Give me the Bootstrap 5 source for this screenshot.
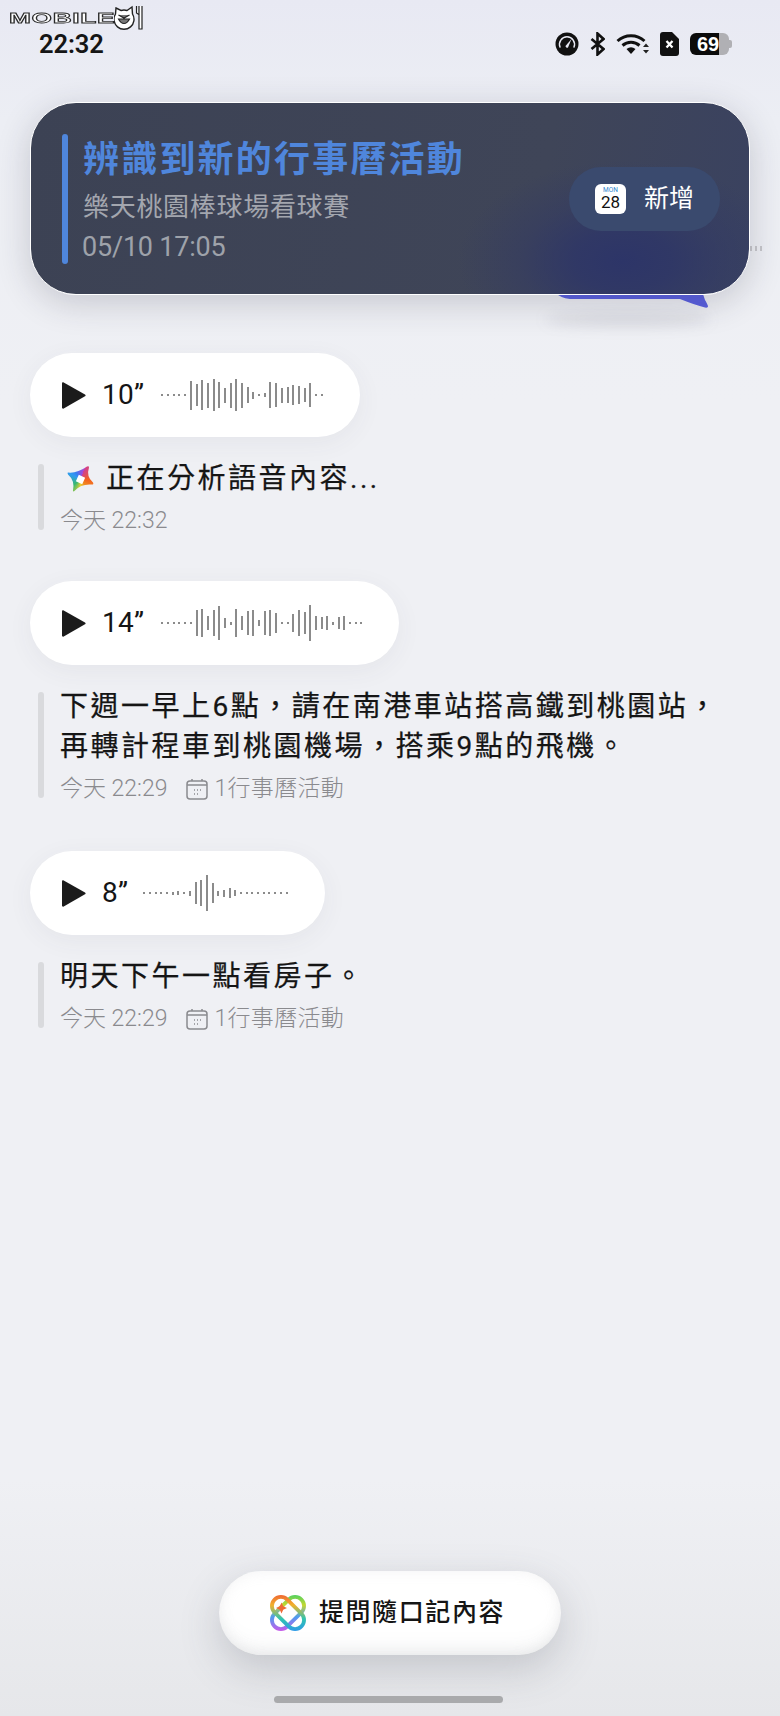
<!DOCTYPE html>
<html lang="zh-Hant">
<head>
  <meta charset="UTF-8" />
  <meta name="viewport" content="width=device-width, initial-scale=1.0"/>
  <title>隨口記</title>
  <link rel="stylesheet" href="https://cdn.jsdelivr.net/npm/bootstrap@5.3.0/dist/css/bootstrap.min.css" />
  <style>
    body { background: #eff0f4; font-family: Roboto, "Noto Sans CJK TC", sans-serif; color: #151515; }
    .phone-page { width: 780px; height: 1716px; overflow: hidden; position: relative; background: linear-gradient(#e8e9f3 0, #eceef4 120px, #eff0f4 400px, #eff0f4 1480px, #e6e7ea 1716px); }

    .site-logo { position: absolute; left: 9px; top: 5px; height: 25px; }
    .site-logo-text { position: absolute; left: 0; top: 4px; font: 700 15px/18px "Liberation Sans", sans-serif; color: #fff; -webkit-text-stroke: .8px #2a2a2a; letter-spacing: .4px; transform: scaleX(1.75); transform-origin: left center; }
    .site-logo svg { position: absolute; left: 105px; top: 0; }

    .status-row { height: 88px; padding-left: 39px; padding-right: 51px; }
    .status-time { font-size: 25.5px; font-weight: 600; letter-spacing: -.1px; }
    .status-icons { gap: 11px; }
    .batt { width: 39px; height: 22px; position: relative; border-radius: 6px; background: linear-gradient(90deg, #0b0b0b 74%, #b0b0b4 74%); color: #fff; font: 700 20px/22px "Liberation Sans", sans-serif; text-align: center; padding-right: 3px; }
    .batt::after { content: ""; position: absolute; right: -3px; top: 7px; width: 3px; height: 8px; border-radius: 0 2px 2px 0; background: #b0b0b4; }

    .event-wrap { margin: 14px 30px 0; height: 193px; position: relative; }
    .event-card { height: 193px; border-radius: 46px; border: 1px solid #fff; padding: 31px 29px 31px 31px; background: radial-gradient(165px 100px at 592px 158px, #2d3568 0, rgba(45,53,104,.8) 30%, rgba(45,53,104,.35) 62%, rgba(45,53,104,0) 100%), linear-gradient(100deg, #3c4254, #3f4558 70%, #3a4260); box-shadow: 0 8px 34px rgba(40,42,60,.2); position: relative; z-index: 1; }
    .event-line { width: 6px; height: 130px; border-radius: 3px; background: #4f86dc; }
    .event-text { margin-left: 15px; }
    .event-title { font-size: 36px; line-height: 46px; font-weight: 700; color: #4f86dc; letter-spacing: 2.2px; margin-top: 3px; }
    .event-sub { font-size: 26px; line-height: 36px; color: #a3a6ae; letter-spacing: .7px; margin-top: 6px; }
    .event-date { font-size: 27px; line-height: 36px; color: #9ea2aa; margin: 4px 0 0 -1px; letter-spacing: -.2px; }
    .event-add { width: 151px; height: 64px; background: #3a4a6e; color: #fff; font-size: 25px; gap: 18px; border-radius: 32px; border: 0; padding: 0; }
    .event-add:hover { background: #3a4a6e; color: #fff; }
    .cal-tile { width: 31px; height: 30px; background: #fff; border-radius: 6px; color: #111; text-align: center; position: relative; }
    .cal-tile b { position: absolute; left: 0; right: 0; top: 3px; font: 400 6.5px/7px Roboto, sans-serif; color: #2f86d0; }
    .cal-tile span { position: absolute; left: 0; right: 0; top: 9px; font: 400 17px/19px Roboto, sans-serif; }
    .bubble-tail { position: absolute; left: 525px; top: 190px; z-index: 0; }
    .tail-shadow { position: absolute; left: 515px; top: 210px; width: 165px; height: 14px; border-radius: 50%; background: rgba(90,92,110,.14); filter: blur(7px); }
    .stray-dots { position: absolute; left: 720px; top: 144px; gap: 3px; }
    .stray-dots i { display: block; width: 2px; height: 5px; background: #c6c6ca; }

    .note-list { margin: 58px 0 0 30px; }
    .voice-pill { height: 84px; padding: 0 37px 0 31px; box-shadow: 0 6px 26px rgba(60,62,80,.06); }
    .play-tri { margin-right: 16px; }
    .voice-time { font-size: 28px; margin-right: 17px; letter-spacing: .3px; }
    .voice-time.one-digit { margin-right: 15px; }
    .wave { gap: 3.7px; }
    .wave-bar { width: 2px; background: #8b8b8b; display: block; }
    .note-block { margin: 27px 0 53px 8px; gap: 16px; }
    .note-block.first-note { margin-bottom: 51px; }
    .note-rule { width: 6px; border-radius: 3px; background: #d9dadd; flex: none; }
    .note-body { margin: -5px 0; }
    .note-text { font-size: 28px; line-height: 40px; letter-spacing: 2.5px; font-weight: 400; -webkit-text-stroke: .25px #151515; }
    .note-meta { font-size: 23px; line-height: 28px; margin-top: 8px; color: #8a8a8e; font-weight: 300; gap: 19px; }
    .note-meta .cal-link { gap: 6px; letter-spacing: .3px; }
    .ai-star { width: 27px; height: 27px; position: relative; margin: 0 12px 0 7px; flex: none; background: conic-gradient(from 20deg, #d0408f, #f4601f 70deg, #f08a20 120deg, #e8d030 160deg, #38b870 210deg, #2f9af2 280deg, #3a7cf0 310deg, #a847d8 360deg); clip-path: path("M1 7Q10 8 20 1Q22 0 22 2Q19 11 26 17Q27 19 25 19Q14 18 8 25Q6 27 6 25Q8 15 1 9Q0 7 1 7Z"); }
    .ai-star::after { content: ""; position: absolute; left: 10px; top: 10px; width: 7px; height: 7px; background: #fff; transform: rotate(25deg); }

    .ask-row { position: absolute; left: 0; right: 0; bottom: 61px; }
    .ask-btn { width: 342px; height: 84px; border-radius: 42px; border: 0; gap: 13px; padding: 0 5px 0 0; font-size: 25px; font-weight: 500; letter-spacing: 1.6px; color: #151515; background: #fff; box-shadow: inset 0 -14px 22px -12px rgba(120,122,130,.16), inset 0 0 14px rgba(190,190,195,.18), 0 14px 40px rgba(70,72,85,.22); }
    .ask-btn:hover { background: #fff; color: #151515; }
    .home-bar { position: absolute; left: 274px; top: 1696px; width: 229px; height: 7px; border-radius: 4px; background: #a9aaac; }
  </style>
</head>
<body class="m-0">
<div class="phone-page">
  <div class="site-logo">
    <span class="site-logo-text">MOBILE</span>
    <svg width="30" height="25" viewBox="0 0 30 25" fill="none" stroke="#222" stroke-width="1.4">
      <path d="M2 3l5 2.500a10.500 10.500 0 0 1 6 0L18 2l.5 7a10 10 0 1 1-17 0z" fill="#fff"/>
      <path d="M4.500 10l5.500 3 5.500-3M4.500 14c3 6 8 6 11 0z" fill="#777" stroke-width="1.200"/>
      <path d="M25 1v23h3V1M22.500 1v7l3 2" stroke-width="1.200" fill="#fff"/>
    </svg>
  </div>

  <div class="status-row d-flex align-items-center justify-content-between">
    <span class="status-time">22:32</span>
    <div class="status-icons d-flex align-items-center">
      <svg width="24" height="24" viewBox="0 0 24 24"><circle cx="12" cy="12" r="11.500" fill="#111"/><path d="M5 15a7.500 7.500 0 1 1 14 0" fill="none" stroke="#e8e9f3" stroke-width="1.500" stroke-linecap="round"/><path d="M10.500 14l6-7-3.500 8.500a1.700 1.700 0 0 1-2.500-1.500z" fill="#e8e9f3"/></svg>
      <svg width="15" height="24" viewBox="0 0 15 24" fill="none" stroke="#111" stroke-width="2.600"><path d="M1.500 7l12 10-6 5.500V1.500l6 5.500-12 10"/></svg>
      <svg width="33" height="22" viewBox="0 0 33 22"><g fill="none" stroke="#111" stroke-width="3"><path d="M1.500 8a20 20 0 0 1 27 0"/><path d="M6.500 12.500a13 13 0 0 1 17 0"/></g><path d="M10.500 16a7.500 7.500 0 0 1 9 0l-4.500 5z" fill="#111"/><path d="M27 14l3-3.500 3 3.500zM27 17h6l-3 3.500z" fill="#222"/></svg>
      <svg width="19" height="24" viewBox="0 0 19 24"><path d="M3 0h9l7 7v14a3 3 0 0 1-3 3H3a3 3 0 0 1-3-3V3a3 3 0 0 1 3-3z" fill="#111"/><path d="M6.500 9l6 6.500M12.500 9l-6 6.500" stroke="#fff" stroke-width="2.300"/></svg>
      <div class="batt">69</div>
    </div>
  </div>

  <div class="event-wrap">
    <svg class="bubble-tail" width="156" height="18" viewBox="0 0 156 18"><path d="M0 0H148V2L150 8Q153 13 153 14.500Q153 16 150 15.500Q140 13 125 7L15 7Q5 6 0 0Z" fill="#5a60e0"/></svg>
    <div class="tail-shadow"></div>
    <div class="stray-dots d-flex"><i></i><i></i><i></i></div>
    <div class="event-card d-flex align-items-start">
      <div class="event-line flex-shrink-0"></div>
      <div class="event-text flex-grow-1">
        <div class="event-title">辨識到新的行事曆活動</div>
        <div class="event-sub">樂天桃園棒球場看球賽</div>
        <div class="event-date">05/10 17:05</div>
      </div>
      <button class="btn event-add d-flex align-items-center justify-content-center flex-shrink-0 align-self-center">
        <span class="cal-tile d-block"><b>MON</b><span>28</span></span>
        新增
      </button>
    </div>
  </div>

  <div class="note-list">
    <div class="voice-pill d-inline-flex align-items-center bg-white rounded-pill">
      <svg class="play-tri" width="25" height="27" viewBox="0 0 25 27"><path d="M1 1.500v24c0 1 .8 1.500 1.700 1L24 14.300c.8-.5.8-1.300 0-1.800L2.700.500C1.800 0 1 .5 1 1.500z" fill="#1b1b1b"/></svg>
      <span class="voice-time">10”</span>
      <div class="wave d-flex align-items-center" data-bars="2,2,2,2,2,29,22,30,25,32,26,15,25,32,25,16,7,2,4,26,24,15,16,20,18,14,24,2,2"></div>
    </div>
    <div class="note-block first-note d-flex">
      <div class="note-rule"></div>
      <div class="note-body">
        <div class="note-text d-flex align-items-center">
          <span class="ai-star"></span>
          正在分析語音內容...
        </div>
        <div class="note-meta d-flex">今天 22:32</div>
      </div>
    </div>

    <div class="voice-pill d-inline-flex align-items-center bg-white rounded-pill">
      <svg class="play-tri" width="25" height="27" viewBox="0 0 25 27"><path d="M1 1.500v24c0 1 .8 1.500 1.700 1L24 14.300c.8-.5.8-1.300 0-1.800L2.700.500C1.800 0 1 .5 1 1.500z" fill="#1b1b1b"/></svg>
      <span class="voice-time">14”</span>
      <div class="wave d-flex align-items-center" data-bars="2,2,2,2,2,2,26,28,14,26,34,10,3,28,14,24,26,6,24,26,20,2,2,18,26,22,36,14,12,14,3,12,14,2,2,2"></div>
    </div>
    <div class="note-block d-flex">
      <div class="note-rule"></div>
      <div class="note-body">
        <div class="note-text">下週一早上6點，請在南港車站搭高鐵到桃園站，<br>再轉計程車到桃園機場，搭乘9點的飛機。</div>
        <div class="note-meta d-flex">
          <span>今天 22:29</span>
          <span class="cal-link d-flex align-items-center">
            <svg width="22" height="22" viewBox="0 0 22 22" fill="none" stroke="#8a8a8e" stroke-width="1.500"><rect x="1" y="3" width="20" height="18" rx="3"/><path d="M1 7h20M6 1v2M16 1v2"/><path d="M8 12h1M11 12h1M14 12h1M8 16h1M11 16h1" stroke-width="1.400"/></svg>
            1行事曆活動
          </span>
        </div>
      </div>
    </div>

    <div class="voice-pill d-inline-flex align-items-center bg-white rounded-pill">
      <svg class="play-tri" width="25" height="27" viewBox="0 0 25 27"><path d="M1 1.500v24c0 1 .8 1.500 1.700 1L24 14.300c.8-.5.8-1.300 0-1.800L2.700.500C1.800 0 1 .5 1 1.500z" fill="#1b1b1b"/></svg>
      <span class="voice-time one-digit">8”</span>
      <div class="wave d-flex align-items-center" data-bars="2,2,2,2,2,3,4,2,5,22,26,36,20,5,7,10,6,2,2,2,2,2,2,2,2,2"></div>
    </div>
    <div class="note-block d-flex">
      <div class="note-rule"></div>
      <div class="note-body">
        <div class="note-text">明天下午一點看房子。</div>
        <div class="note-meta d-flex">
          <span>今天 22:29</span>
          <span class="cal-link d-flex align-items-center">
            <svg width="22" height="22" viewBox="0 0 22 22" fill="none" stroke="#8a8a8e" stroke-width="1.500"><rect x="1" y="3" width="20" height="18" rx="3"/><path d="M1 7h20M6 1v2M16 1v2"/><path d="M8 12h1M11 12h1M14 12h1M8 16h1M11 16h1" stroke-width="1.400"/></svg>
            1行事曆活動
          </span>
        </div>
      </div>
    </div>
  </div>

  <div class="ask-row d-flex justify-content-center">
    <button class="btn ask-btn d-flex align-items-center justify-content-center">
      <svg width="36" height="36" viewBox="0 0 36 36" fill="none" stroke-width="3.800">
        <defs>
          <linearGradient id="askGradA" gradientUnits="userSpaceOnUse" x1="4" y1="4" x2="32" y2="32"><stop offset="0" stop-color="#ee5a34"/><stop offset=".3" stop-color="#f2b22c"/><stop offset=".65" stop-color="#2fc4b0"/><stop offset="1" stop-color="#2f94f0"/></linearGradient>
          <linearGradient id="askGradB" gradientUnits="userSpaceOnUse" x1="32" y1="4" x2="4" y2="32"><stop offset="0" stop-color="#3fd06a"/><stop offset=".3" stop-color="#c4d82e"/><stop offset=".6" stop-color="#4f9cf0"/><stop offset="1" stop-color="#d850e8"/></linearGradient>
        </defs>
        <rect x="-1" y="9" width="38" height="18" rx="9" transform="rotate(-45 18 18)" stroke="url(#askGradB)"/>
        <rect x="-1" y="9" width="38" height="18" rx="9" transform="rotate(45 18 18)" stroke="url(#askGradA)"/>
        <path d="M11.500 7.500l1.700 3.800 3.800 1.700-3.800 1.700-1.700 3.800-1.700-3.800L6 13l3.800-1.700z" fill="#ee6a36"/>
      </svg>
      提問隨口記內容
    </button>
  </div>
  <div class="home-bar"></div>
</div>

<script>
  document.querySelectorAll(".wave").forEach(function (wave) {
    wave.dataset.bars.split(",").forEach(function (h) {
      let bar = document.createElement("span");
      bar.className = "wave-bar";
      bar.style.height = h + "px";
      wave.appendChild(bar);
    });
  });
</script>
<script src="https://cdn.jsdelivr.net/npm/bootstrap@5.3.0/dist/js/bootstrap.bundle.min.js"></script>
</body>
</html>
